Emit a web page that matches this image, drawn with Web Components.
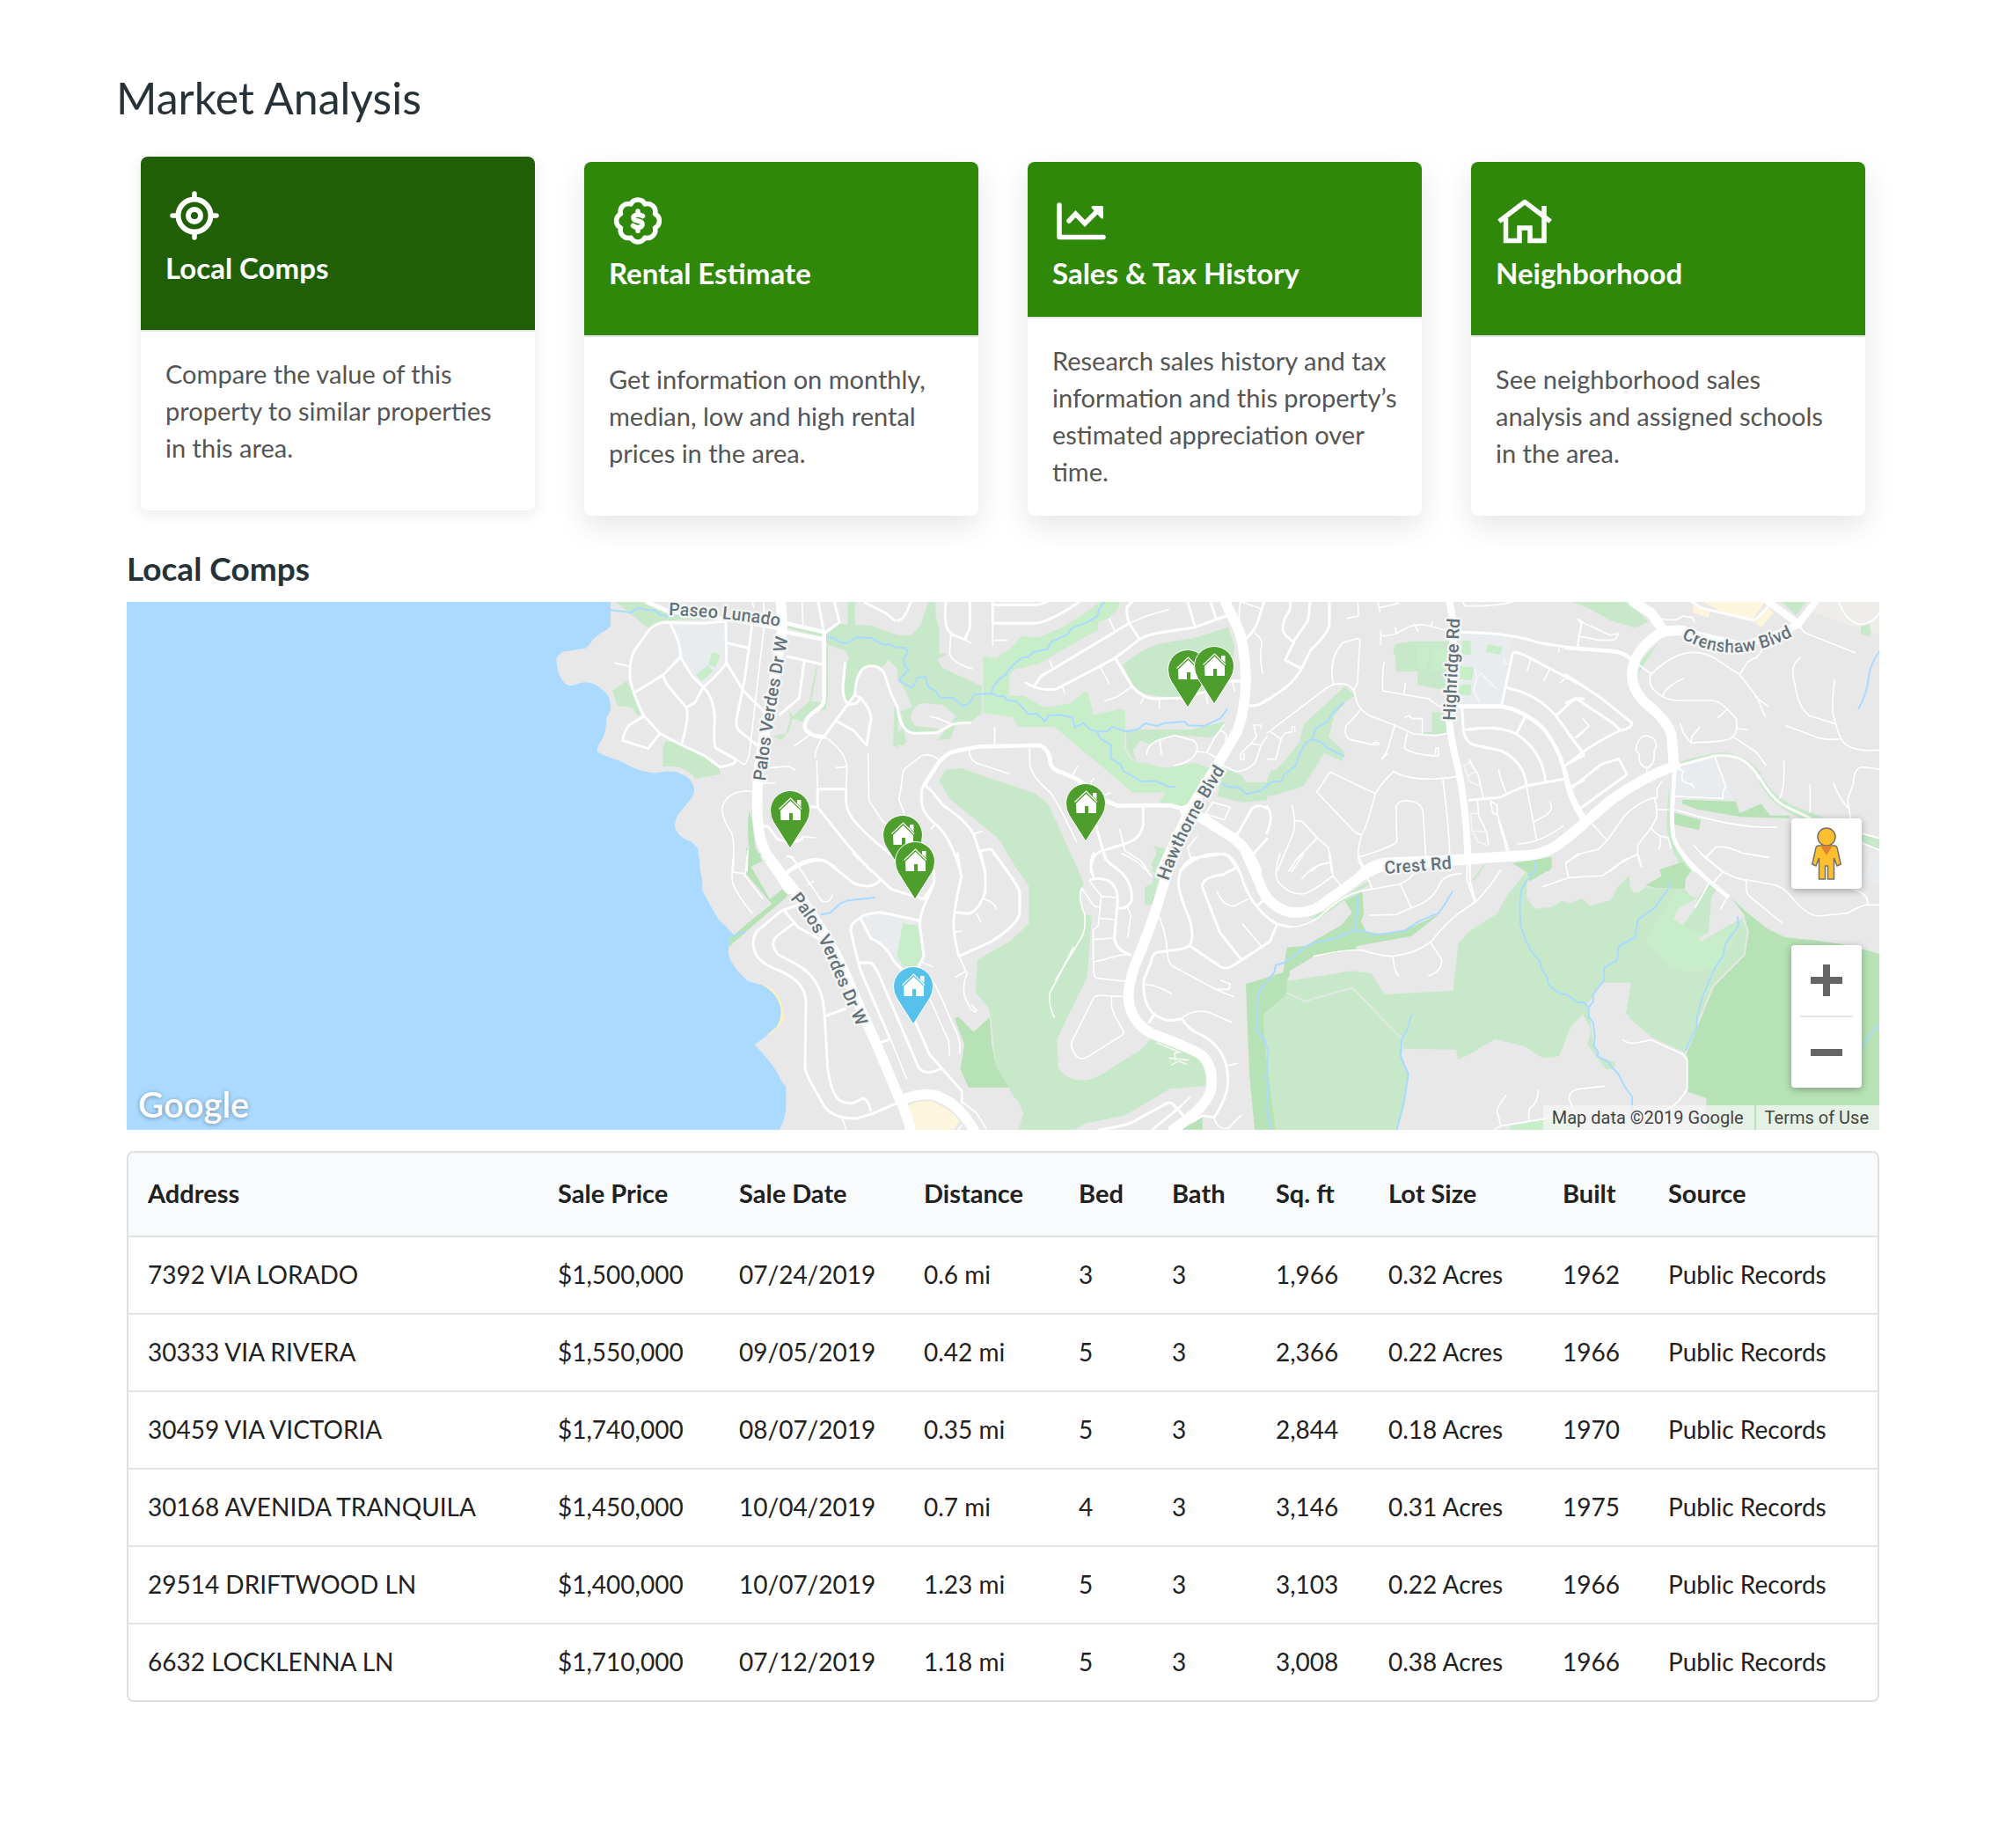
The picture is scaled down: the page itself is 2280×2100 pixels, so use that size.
<!DOCTYPE html>
<html lang="en">
<head>
<meta charset="utf-8">
<title>Market Analysis</title>
<style>
  body { margin: 0; background: #fff; font-family: Lato, "Open Sans", sans-serif; color: #212121; }
</style>
</head>
<body>
<market-analysis></market-analysis>

<script>
function define(name, html, setup) {
  customElements.define(name, class extends HTMLElement {
    constructor() {
      super();
      this.attachShadow({ mode: 'open' });
    }
    connectedCallback() {
      this.shadowRoot.innerHTML = html;
      if (setup) setup(this, this.shadowRoot);
    }
  });
}

/* ---------- card icons ---------- */
const ICONS = {
  target: `<g fill="none" stroke="#fff" stroke-width="6"><circle cx="33" cy="33" r="18.5"/><circle cx="33" cy="33" r="7"/>
    <path stroke-linecap="round" stroke-width="5.5" d="M33 8V14M33 52V58M8 33H14M52 33H58"/></g>`,
  badge: `<g fill="none" stroke="#fff" stroke-width="5.5" stroke-linejoin="round">
    <path d="M25 14 A9 9 0 0 1 41 14 A9 9 0 0 1 52.500 25 A9 9 0 0 1 52.500 41 A9 9 0 0 1 41 52 A9 9 0 0 1 25 52 A9 9 0 0 1 13.500 41 A9 9 0 0 1 13.500 25 A9 9 0 0 1 25 14Z"/>
    <path stroke-linecap="round" d="M38.500 27.500 Q35 25.500 32 26 Q27.500 27 28 30 Q28.500 32.500 33 33 Q38.500 34 38 37.500 Q37.500 40.500 33 40.500 Q30 40.500 27.500 38.500M33 22V26M33 41V44.500"/></g>`,
  chart: `<g fill="none" stroke="#fff" stroke-width="5.500" stroke-linecap="round" stroke-linejoin="round">
    <path d="M8 15V51.500H58"/><path stroke-linejoin="miter" d="M19 33L26.500 25L37 36L52 21"/>
    <path fill="#fff" stroke-width="3" d="M46 17.500H56.500V29Z"/></g>`,
  house: `<g fill="none" stroke="#fff" stroke-width="5.500" stroke-linecap="round" stroke-linejoin="round">
    <path stroke-linecap="square" d="M6 32L33 11.500L60 32"/><path stroke-linejoin="miter" stroke-linecap="butt" d="M11.500 30V55.500H27V41H39V55.500H55V16"/></g>`
};

define('analysis-card', `
<style>
  :host { display: block; }
  button { all: unset; box-sizing: border-box; cursor: pointer; display: flex; flex-direction: column; width: 100%; height: 100%;
    border-radius: 8px; overflow: hidden; background: #fff; box-shadow: 0 12px 32px rgba(38, 50, 56, .12); }
  :host([selected]) { transform: translateY(-6px); }
  :host([selected]) button { box-shadow: 0 4px 16px rgba(38, 50, 56, .1); }
  .head { flex: 1 1 auto; padding: 28px 28px 29px; background: #2f880a; color: #fff; border-bottom: 2px solid #e8e8ea; }
  :host([selected]) .head { background: #205f06; }
  svg { display: block; width: 66px; height: 66px; margin: 6px 0 5px; }
  .title { display: block; font-size: 33px; line-height: 42px; font-weight: 700; }
  .body { flex: 1 1 auto; padding: 27px 24px 29px 28px; font-size: 29px; line-height: 42px; color: #555; }
</style>
<button type="button"><span class="head"><svg viewBox="0 0 66 66" aria-hidden="true"></svg><span class="title"><slot name="title"></slot></span></span>
<span class="body"><slot></slot></span></button>`,
(host, root) => {
  root.querySelector('svg').innerHTML = ICONS[host.getAttribute('icon')];
  root.querySelector('button').setAttribute('aria-pressed', host.hasAttribute('selected'));
});

/* ---------- map pins ---------- */
define('map-pin', `
<style>
  :host { display: block; position: absolute; width: 46px; height: 67px; color: #4d9e2d; }
  :host([subject]) { color: #56c1ea; }
  svg { display: block; overflow: visible; }
</style>
<svg width="46" height="67" viewBox="0 0 46 67" role="img" aria-label="Home">
  <path fill="currentColor" stroke="#fff" stroke-width="1" d="M23 66 L4 36 Q0.500 30 0.500 23 A22.500 22.500 0 0 1 45.500 23 Q45.500 30 42 36Z"/>
  <path fill="#fff" d="M12 22.500L23.500 11.500L35 22.500V34H26V26H22V34H12.500ZM31 11H35.500V19L31 15Z"/>
  <path fill="none" stroke="currentColor" stroke-width="1.200" d="M10.500 23.500L23.500 10.800L36.500 23.500"/>
  <path fill="none" stroke="#fff" stroke-width="1.200" d="M10.500 21.500L23.500 9L36 21.500"/>
</svg>`);

/* ---------- map drawing: sheets share one scale and are placed by origin ---------- */
const SHEETS = { A: [600, 670], B: [1020, 670], C: [1440, 670], D: [1780, 670], E: [760, 970], F: [1200, 970], G: [1660, 970] };

const LAYERS = [
  ['water', {
    A: 'M-1368 42H282V122Q270 140 245 150L220 172Q210 192 195 200L120 212Q98 225 97 240Q100 280 112 300Q125 325 145 328Q165 325 180 318Q210 312 230 325Q258 340 275 365Q283 380 282 410L268 438Q267 490 250 515Q235 535 235 552Q270 572 300 578L370 612Q420 630 460 622Q500 615 520 628Q560 640 567 680Q568 700 550 720L510 770Q495 800 505 820Q520 850 555 858L580 882L588 960H-1368Z',
    E: 'M-1848 0H103Q100 40 115 90V125Q140 175 170 225Q200 250 220 275Q200 310 205 345Q215 385 270 435Q310 445 340 455Q385 480 390 530Q388 570 370 590L335 620L293 652Q350 710 372 750Q385 780 400 795V870Q395 910 378 941H-1848Z'
  }],
  ['school', {
    A: 'M490 118L675 112V240L600 325L560 300L520 230L515 185Z',
    C: 'M660 150L740 150L835 165L800 390H690L655 380Z',
    D: 'M375 610L505 570L545 670L575 718L375 705ZM1020 960L1068 880V960Z',
    E: 'M655 222L700 205L855 228V385L800 385L760 330L690 290Z',
    G: 'M1375 85L1400 0H1428V110Z'
  }],
  ['plain', { D: 'M850 42H1068V155L830 75Z' }],
  ['beach', { E: 'M318 447Q350 450 375 485Q395 520 393 570L350 615L335 618L368 590Q385 565 382 530Q375 480 318 447Z' }],
  ['shops', {
    D: 'M468 42H680L638 98L540 80ZM435 52L490 75L485 95L432 78ZM690 65L708 78L665 128L642 112Z',
    E: 'M818 860Q850 840 900 845Q960 870 993 912L970 941H840Z'
  }],
  ['green', {
    A: 'M300 42L415 135Q440 108 470 105L660 100L680 95L480 75L390 42ZM288 345L340 310L355 345L385 425L375 430L355 402L305 396ZM460 540L470 515L520 528L600 565L650 608L658 630L572 644Q540 605 490 602H460ZM885 120L1010 150L1060 115L1090 120V42H1115V120L1170 122L1260 155V270L1230 240L1208 265Q1170 250 1140 270Q1120 300 1118 350L1090 390Q1072 380 1072 350L1082 250L1095 235L1085 210L1015 185L1010 165L885 130ZM1013 190H1023V370L1015 410L990 410L940 450L900 440Q900 480 865 512L835 500L880 490L895 440L888 410L905 430L960 380L1013 385ZM1250 400H1262V540L1245 530ZM982 260L988 262L967 380H960Z',
    B: 'M0 155H48L80 120L105 42H130V85L142 130V218L172 220L135 238L155 268L290 330V420L250 450H205L180 508L135 514L165 478L60 490L25 470L10 415L50 400L30 350L5 310L0 300ZM0 490L20 470L30 520L20 532L0 530ZM780 477H1000L1115 450V470L1070 505L940 495L860 528L830 515L803 545L815 583L800 580L778 545ZM768 255Q830 205 890 185L1010 165L1128 128L1150 190L1140 300L1045 350L965 370Q900 365 850 358Q810 345 790 300ZM142 650L165 615L215 608L470 695L515 732L618 960H412L345 850L300 812L180 715ZM1115 610L1170 630L1190 657H1260V718L1180 726L1090 705ZM875 872L915 885L895 960H865L890 930Z',
    C: 'M265 330L300 360L265 385L230 430L210 500L265 555L258 585L195 558L125 670L35 698L0 705V650L15 615H30L60 585L110 520L125 460ZM430 210L437 185L500 176H630V340L590 340L512 325L515 280H440L438 228ZM562 416L612 420V492H535V486H562ZM1045 42H1080V55Z',
    D: 'M20 42H205L245 75L280 108L238 130L150 105L80 65ZM315 180L262 262L245 290L255 240ZM735 42H818L785 88ZM1005 125L1035 118L1040 150L1030 160L1005 150ZM380 590Q470 560 540 555Q620 565 668 632L650 630Q600 570 530 565Q470 570 380 600ZM655 650L670 640Q705 705 770 735L880 778H800Q700 740 655 650ZM350 670L355 800Q365 880 425 960L385 930Q345 860 343 800ZM1005 835L1068 850V888L1005 862Z',
    E: 'M1155 0H1322V941H1193L1210 885L1190 840L1180 835L1115 718L1098 555L1090 525L1047 475L1053 362L1165 298L1228 238V112Z',
    F: 'M0 0H50L95 100L80 145L98 205L123 213L107 420L5 630L8 730Q40 775 95 773Q130 770 160 750L290 668Q310 650 325 628L480 690Q515 730 512 792L390 802L238 892L100 920L65 941H0ZM303 115L330 100L335 60L325 35L345 0H375L330 175H303ZM788 435L1010 400L1075 407L1120 480L1355 467L1373 305L1410 265L1440 248V668L1372 702L1365 668L1185 665V635L1180 690L1202 750L1190 860L1165 941H750L735 830L712 640L708 548L788 480ZM860 220L930 190L1030 115L1065 95L1070 105L1020 135L900 220Z',
    G: 'M0 300L35 262L125 205L160 140L225 62L228 90L225 150L253 188L310 182L345 162L377 170L413 152L440 177L512 160L535 115L575 75L580 120Q590 140 610 130L632 115L765 122L790 150H808L850 100L880 110L855 150L848 265L820 298L970 215L983 265L970 345L860 450L810 575L770 680L655 628L575 560L575 548L563 550L582 440H485L430 515L445 580L452 640L470 690L530 715L520 735L495 735L433 650L445 600L417 548L377 588L338 688Q310 700 275 693L218 657L120 633L0 697ZM40 90L78 38L82 42L48 92Z'
  }],
  ['lawn', {
    A: 'M572 290L615 258L632 280L592 312ZM628 214L656 222L640 265L616 255Z',
    B: 'M292 225L335 235L380 205L425 160L480 163L560 130L640 80L690 42H757L752 65L720 98L685 110V140L650 155L600 185L545 215L490 250L400 272L381 290V362H430L500 402L590 388L640 347L650 350L668 427L760 407L776 412L778 490L775 545L800 580L885 602L915 608L1010 590L1070 610L1110 610L1040 700L970 740L895 725L912 692H803L535 468H410L395 435L292 420Z',
    C: 'M512 195L555 200L545 270L508 265ZM567 202H610V280L560 275ZM665 175L695 174V222L665 220ZM752 186L802 196L797 222L747 213ZM660 262L705 265L700 310L658 305ZM652 345Q655 320 680 322L697 325L694 362L655 358Z',
    E: 'M798 238L850 245L866 350L845 385L800 385L778 348Z',
    G: 'M740 125L800 150L755 180L725 225L762 242Q800 275 845 272L815 298L950 240L880 390L775 403L705 378L632 290ZM165 941L175 925L280 908L400 890V941Z'
  }],
  ['wood', {
    A: 'M755 750L765 790L775 880L800 925L760 945L765 960H745V880L755 885Q745 810 755 750Z',
    C: 'M840 932L910 922L970 912V950L960 960H880Z',
    D: 'M398 716L578 722L592 762L665 730L695 770H762V780L595 775L450 750L396 730ZM368 760L460 785L453 820L368 800ZM320 955L390 930L430 960H320Z',
    E: 'M275 0H315L310 20L278 40L345 155L390 120L408 135L400 150L300 235L205 318L208 285L225 275L290 220L352 172L300 110L262 65L270 40ZM975 563L988 556L1040 608L1095 558L1100 640L1115 720L1160 797H1022L995 735L1008 650Z',
    F: 'M985 160L1045 130L1050 210L1040 230L1058 265L1110 275L1190 262L1310 205L1212 282L1025 315V328L880 350L798 400V415L788 435V480L708 548L712 640L735 830L750 941H678L660 750L648 445L775 405L788 320L850 315L975 243L1010 200ZM430 941L500 897V941Z',
    G: 'M180 35L310 12V50L235 95L225 62ZM630 108L685 78L680 55L760 30L785 62L768 85L765 122L660 116ZM915 145Q940 165 970 195L1045 255L1105 285L1200 295L1300 308L1380 328L1428 342V941H838V833L775 812V700L770 685L810 585L862 455L970 345L983 265L970 215Z'
  }],
  ['land', {
    B: 'M45 440Q50 395 85 387L155 392L200 432L180 460L150 475L60 465Z',
    G: 'M808 150L765 175L745 185L725 225L760 242L800 185ZM857 150L915 140L970 212L820 300L812 288L845 270Z'
  }],
  ['trail', { B: 'M290 330V420M778 490V545L800 580L830 590', F: 'M788 475L848 503L1012 458L1180 632', G: 'M965 225L980 265L968 345L862 452L765 685' }],
  ['fence', { G: 'M630 116L765 122M740 125L632 290L705 378L775 403L880 390L965 220' }],
  ['stream', {
    A: 'M282 70L330 75L350 80L375 62L400 68L430 70L450 85L480 92L510 85M1015 162L1045 165L1060 178L1085 183L1120 163L1170 165L1210 187H1235L1260 198',
    B: 'M0 197L28 198L35 215L22 235L25 258L38 272L5 310L50 335L70 300L95 298L105 332L130 345L148 370L190 368L222 397L245 388L262 358L320 354Q330 310 370 290Q380 265 425 232L445 230L465 212L512 203L525 178L580 152L595 130L640 115L680 92L690 62L705 42M320 354L345 365L360 362L375 378L405 380L447 425L475 422L503 450L515 430L550 427L595 435L605 470L635 455L655 475L680 484L715 484L732 467L782 485L822 475L845 456L885 465L910 455L980 450L990 463L1045 465L1100 440L1123 410M680 484L692 508L728 530V575L762 598L770 618L835 655L880 652L925 672H947M1110 662L1125 672L1165 675L1190 697L1240 685L1260 668',
    C: 'M0 665L20 655H48L58 632L98 600L118 545L135 520L155 510L165 475L205 450L225 420L262 386M155 510L185 520L205 540L262 567',
    D: 'M1068 212Q1040 250 1033 290Q1028 350 998 406',
    E: 'M520 208L550 202L585 170L610 160L702 150M205 280L225 280L240 270L258 270',
    F: 'M1352 130L1325 175L1305 203L1240 230L1190 262L1130 272L1085 277L1050 265L1015 262L945 292L885 302L845 322L810 350L785 370L750 380L745 405L720 435L692 475L685 520V605L710 632L725 675L718 765L724 800L718 870L735 941M1027 145L1028 190L1018 262M1212 552L1198 600L1180 632L1175 690L1202 750L1190 830L1175 890L1163 941',
    G: 'M253 28V60L225 92L207 125L202 180L205 245L220 290L245 340L270 365L275 390L297 425V440L315 462L345 480H362L400 508H420L437 525M710 98L708 120L662 185L605 225L595 285L540 315L533 365L490 388L488 435L452 480V505L437 525V555L452 575L458 625L455 655L470 678L465 690L500 708L540 755L560 795L585 828V880L600 941M945 215L948 245L905 305L895 350L870 385L845 440L825 490L808 550L805 590L768 670M1368 655L1428 582'
  }],
  ['lane', {
    A: 'M297 250L348 262M805 130L755 560Q745 600 735 595L712 580M1160 560L1163 720L1210 790L1260 830M985 583L988 680M1000 510L980 555V572M1010 500Q1085 550 1088 610L1085 680M1050 607L1085 604M820 608L890 602L910 615M800 660H842M765 688Q680 680 662 745Q665 790 695 830Q705 860 700 960M935 42L938 120M910 532L955 500M750 888L747 960M885 908L900 915L920 940M935 842L980 846M805 42V110M765 42L770 60',
    B: 'M325 115V190M325 172L373 173M182 155L178 220Q190 250 255 270M230 172L248 181M115 433Q150 440 185 460M332 470V530M245 545Q245 585 280 595L380 628M450 535L452 600Q460 640 520 690Q545 720 610 858M142 580Q110 555 80 568L25 610Q15 625 15 660L5 715L30 780M520 243L527 262M562 330L570 352M692 265L722 320M707 380L750 365L800 330M830 388L838 370M893 375V405M722 100L740 138M790 115L850 90L925 68M615 602L598 630M670 643L655 665M725 692L710 700M128 800L115 815M262 832L288 824M850 563Q850 530 890 513L945 497L1010 515Q1030 535 1018 555Q1010 585 945 600M895 513L900 562M1020 552L1055 555L1100 580M1055 555L1085 500L1115 460M1100 480Q1130 490 1118 510M1075 725L1135 742L1115 785L1050 765ZM1140 310L1150 345M1050 350L1058 388M1170 42Q1160 90 1170 115M1175 42L1240 65M1220 150Q1250 170 1240 200Q1235 240 1245 285M758 818L770 870L775 890L830 925L855 960M1020 842L990 880L1000 915M1215 465L1225 500L1205 525L1170 560V580H1182V560M1215 462H1240V472M1205 525L1240 530L1260 500M1240 530L1220 590Q1190 620 1155 620L1110 600',
    C: 'M0 490L190 345Q230 310 275 325Q300 335 305 380Q315 410 350 430L435 462L500 492L575 498L615 490M225 320Q210 230 260 180L310 167Q318 168 317 185L308 320L298 340M318 412L270 465Q260 500 285 512L365 530L382 528Q380 518 365 522L358 530M435 465L410 550L392 577L410 560M478 490L468 540Q500 565 585 567V540H575V560M400 250Q392 280 395 345L550 372L585 397H620M472 320L468 352M388 142V188M388 158Q430 158 450 145Q490 118 530 120Q570 125 615 142M437 130L442 148M502 118L515 140M565 110L558 125M378 42L385 75M385 62L450 46M310 42L312 90L273 98M470 435L485 430L495 440H530V490M170 690L215 622L370 695M170 690L298 825L322 838M432 620Q390 660 370 695Q340 810 322 838Q305 900 315 930L335 960M432 620Q500 660 645 638M440 740Q450 715 480 720Q530 725 532 760L542 910M440 740L443 860Q420 880 315 912M600 650Q620 800 623 900M85 735Q100 790 90 830L35 960M95 787L120 790L170 845L210 880L220 960M170 848L100 920L75 960M215 932L180 938L150 960M12 485L48 510L60 490L85 485V468H95V485M48 510L30 578L0 578M668 42L675 55Q760 60 840 42M690 580L720 630L738 710M718 720L722 770L750 830L755 870M790 615Q800 660 815 690M885 670L920 855M965 725Q980 750 950 770L910 792M1010 805Q930 865 855 867M888 275L900 238M945 310L965 270M1000 318L1022 298M1060 100L1072 115L1060 195M995 200V212M690 940V960M1055 505L1080 485M762 720L785 735V768L770 760Z M785 765L825 890M790 790L818 890',
    D: 'M40 100L55 110L42 165L38 195M42 158L110 172H165L180 150L150 155L55 112M310 92Q330 105 370 103Q390 98 400 90L430 95L438 110M250 258L290 288Q400 180 500 230L590 288L650 365L678 432M645 365L688 398M592 290L620 245L650 230L670 205M290 288Q270 330 330 365Q360 380 400 378H500Q530 380 580 440Q590 490 560 508Q540 520 425 522L400 490L390 458M425 522L430 500L455 470M330 362Q340 330 400 303M548 410L518 437M585 474L618 477M570 502L650 555L680 598M798 232Q760 260 780 320Q790 400 830 430L920 458M915 310Q905 400 910 425Q930 500 945 520Q980 555 1068 547M750 464L860 505Q900 515 938 508M800 130L815 148L985 215M930 42Q960 120 1010 118Q1050 110 1068 80M275 608V630M275 608Q245 600 250 560Q225 545 255 505Q275 490 300 510Q315 530 300 550Q305 600 275 608M58 440L78 465L30 505M325 655L310 680V710L290 712Q240 730 200 770L140 855M300 708Q312 740 308 780L290 812L245 870Q240 910 257 945M310 750H350M290 812Q310 845 348 845L358 882M320 845L322 870L316 885M0 930L50 900L110 885L140 855L90 800M240 905L200 920L150 960M370 750L440 770Q600 815 720 810M437 873L475 915L530 958M475 915L510 878Q540 870 600 898L690 913M743 585Q745 690 728 710M832 665V758M1068 612L1010 605Q980 610 980 660L960 715L970 780M912 660Q930 710 960 742M372 705L535 712V690L545 670L508 572M1005 830L1068 848M1005 862L1068 888M385 610L400 620Q390 640 400 655L430 665L435 675',
    E: 'M222 0Q210 90 222 110Q240 150 285 203M218 63L255 68L320 152M268 0L262 68M403 8L420 10L520 160Q545 175 558 143M475 105L493 95M1075 155Q1110 165 1118 188M1050 205L1065 232M975 268L1000 264M990 350L1018 410Q1000 450 1010 490L1030 530L1045 540L1050 535L1035 518M980 420L1010 402M862 370L898 385M905 440Q940 510 970 585Q1000 640 992 680M890 495L955 640L958 690M755 630L812 768M1000 845L1050 885L1083 938M593 905L605 941M1380 320L1300 475Q1295 520 1315 558M1380 630Q1365 650 1380 675M987 941L1000 925',
    F: 'M550 130Q570 180 610 178L655 155M637 240L700 315M88 118Q75 150 98 205Q105 260 85 290L0 430M115 92L155 145L210 150M90 120L130 178L150 183M155 145L145 245L128 260V370L225 345H255M148 220L200 225M128 293L195 288M130 370Q125 420 140 425L235 435M245 185L256 210L245 285M345 200Q375 260 380 330Q380 370 400 385L550 465L607 488M545 463H590L595 445L562 432M305 445Q350 450 395 478M235 488L145 483L130 490L55 640Q50 670 75 695Q90 705 110 692L225 620Q235 610 228 600L200 550L190 520V488M430 560Q470 530 520 540L600 575M587 722L620 715M632 892L590 935Q550 945 540 900M765 0Q740 70 760 100Q800 140 840 138Q870 135 945 75L935 0M840 85Q880 35 935 30M805 60L845 0M945 75L970 105M1030 0L1078 118M800 248Q840 255 900 215Q980 140 1040 128L1170 105Q1200 95 1220 70M1175 105L1212 185M1068 210L1160 208L1212 185Q1290 160 1310 100Q1330 70 1382 68M880 350Q960 330 1040 328Q1110 350 1150 350Q1230 340 1280 300Q1350 210 1432 165L1412 120V40M1150 350Q1150 390 1168 416M1278 303L1315 360Q1320 400 1272 416M455 0L462 15M225 0Q280 20 325 75M458 830L425 862',
    G: 'M22 38V90L48 165M32 38V90L52 165L0 200M280 113L370 82L485 75L540 35L605 0L617 45M368 82L358 35L400 0M820 0L900 65Q950 90 980 90L1060 105Q1100 110 1130 150Q1180 210 1220 213L1320 203Q1350 185 1380 175H1428M835 15L850 0M892 65L862 100M975 92Q970 130 985 145L1095 235M1330 120Q1390 130 1390 175M910 145L888 187M850 95L820 150L800 183M970 0L1050 13M138 55Q100 115 52 165M555 635Q570 650 600 645L650 635L760 685L773 705V800Q750 850 700 875M155 825Q120 870 125 880L138 928L115 941M138 928L285 905L420 885M265 808Q265 850 235 870Q230 890 235 908M490 793L400 803Q370 810 370 835L390 885'
  }],
  ['path', {
    C: 'M672 600L690 590L710 620L685 635ZM685 635L690 655L725 668M720 762L695 765L700 822L745 825M700 822L720 860L755 872M710 270L715 300L730 285L780 335M715 300L705 345L725 385M810 235V250L822 255',
    F: 'M345 645L425 678L405 680L408 705M388 697L452 704M395 720L420 708L445 718'
  }],
  ['street', {
    A: 'M415 135Q440 112 470 112L600 115L675 108M415 135L365 205Q345 240 348 300Q355 350 395 430L450 490L520 528L600 565L655 605L700 595L712 580L640 540Q632 525 637 440Q635 370 598 332L560 295L520 230Q522 180 488 122M362 352L460 292L518 232M460 292L475 325L540 402Q552 430 525 525M540 402L570 385L598 332Q640 300 677 250L675 112M677 250L735 345L805 415M765 115L740 300L712 440Q708 470 720 480L780 530M680 182L748 198M395 432L345 462Q320 500 325 515L410 542L450 490M885 228L1005 255M942 245L925 370L860 425M1055 450L1110 480L1155 530L1170 440Q1170 410 1135 370L1115 360M1010 500L1115 358Q1120 260 1170 260Q1210 260 1220 300L1240 360L1260 400M1082 250L1074 330Q1074 380 1095 392L1120 388L1135 370M990 42L1010 150L1062 112L1045 42M1150 45L1220 80L1250 105M1085 680Q1080 740 1100 770Q1130 820 1260 920M988 680H1085M988 682V742L965 740M988 742L1090 870L1170 960M885 960Q990 880 1060 960M800 805L820 808L850 850Q900 870 935 850',
    B: 'M165 42Q155 140 190 155L230 170L247 130V42M325 42V115M325 52H480L510 42M325 115H470Q520 110 620 42M438 318L465 332Q500 345 540 340L740 235L825 170Q850 155 890 148L1015 128L1120 90M465 330L490 295L790 115Q780 90 783 60L800 42M790 115L825 168M990 42L1015 128M1068 42L1085 95M742 232L800 330Q830 365 870 372L965 370L1045 350L1130 312H1170M45 42Q25 105 0 105M0 400Q10 490 60 490L135 488L185 460L210 455L248 454M92 665Q75 690 85 740Q95 770 130 800Q180 840 215 960M92 665L120 690L155 735Q240 790 262 840L300 960M285 890L320 885L375 960M838 735V800Q830 850 780 865L700 890Q660 900 660 960M675 800L710 920L745 950M965 960Q1000 920 1050 905Q1110 895 1130 910L1165 960M1150 850L1210 745Q1230 730 1260 745M1210 905L1260 850M1185 170Q1210 150 1225 120L1250 42M1200 395Q1230 400 1260 375',
    C: 'M80 42L78 70Q50 110 55 140Q60 160 92 178L62 240L118 270M92 175L140 105L147 42M213 42V115Q210 150 150 205L118 270Q90 320 40 350L0 378M655 145L740 148Q850 155 930 182L1080 205M800 395L838 215Q860 210 900 235L1080 330M820 335Q920 355 985 430L1080 560M850 492L880 435M985 430L1050 372H1080M665 398L670 485Q680 525 710 530L800 550Q880 590 885 670M680 478Q790 460 850 492Q940 550 950 655M690 718L795 708Q830 690 880 670L1018 645M1015 600L1080 565M1030 675L1080 650M0 740Q25 770 0 830',
    D: 'M660 642Q700 710 740 735L830 778M385 600L500 568Q560 560 600 580Q640 605 660 645M0 290L120 370L225 455Q225 470 190 480M0 385L35 372L160 455L185 480Q100 520 50 560L0 598M0 480L55 555M15 680L120 595L180 577L208 630L50 745M0 620Q20 720 72 785M430 42L460 62L640 105Q650 100 690 58',
    E: 'M385 195L300 265Q275 310 305 355Q325 380 380 400Q470 440 468 510L465 730Q470 755 490 790L530 860Q560 905 640 903L700 885L780 850M430 235L370 280Q340 310 375 345L440 380Q530 430 532 560L542 730Q550 800 575 835Q600 855 630 850L660 835Q680 835 688 875M385 195L440 175M395 195L440 250L520 295M540 552L600 530M400 70Q460 25 515 22Q545 25 560 45L630 100Q690 125 720 92M630 0L760 122L870 155L905 100V60M905 100L870 180Q850 230 860 270L870 350L850 390M855 228L720 200Q660 205 650 222Q610 240 625 280Q640 350 655 400L755 632L720 645M655 372H690Q705 385 720 420L850 725Q870 760 925 735M655 222L690 290Q740 310 770 370L800 400M835 560L890 685L1000 810V850M985 0L998 80Q970 200 972 250Q975 300 990 350L1100 300Q1195 240 1197 200V130Q1180 90 1110 0M1065 0L1080 70V130Q1055 200 1020 205L975 200',
    F: 'M165 0Q170 30 200 45Q265 90 258 160Q245 190 215 185M120 88Q165 80 190 100Q215 125 210 170L200 290Q205 330 255 345M130 85Q110 30 130 0M470 15Q420 40 418 100Q420 140 455 220Q475 290 455 315L430 325L345 337Q330 340 325 370L300 430Q295 520 340 550Q380 580 430 562Q450 600 500 620Q590 670 587 780Q585 830 540 900L500 893L465 915M470 15L575 0Q620 20 640 100Q680 200 755 240L797 250M755 240L730 300L600 385Q580 395 560 385L455 313M612 50L570 72Q495 80 500 115L560 270L600 320L630 358M685 180L708 160M318 575L335 550M150 941Q260 925 280 905L385 848Q400 850 410 865L440 900M330 941L425 862'
  }],
  ['road', {
    A: 'M405 42L480 75L680 100L850 130M880 115L1010 145M880 145L1010 170M1010 145V370Q1010 395 985 410Q940 440 945 470Q955 500 1010 502',
    B: 'M92 665L140 590Q170 555 200 550L280 535L480 531Q510 535 520 575Q520 605 540 615L600 640L640 665M710 720L750 737L930 735L980 750',
    C: 'M645 398H800Q870 410 940 470Q1010 560 1020 650Q1030 710 1075 785',
    D: 'M0 198L160 210Q200 215 225 240M370 610L362 750Q360 800 365 840Q380 890 440 955',
    G: 'M745 -15Q800 60 910 145'
  }],
  ['avenue', {
    C: 'M622 42Q640 120 635 170L620 430Q625 510 650 600Q680 740 685 910',
    D: 'M385 140L600 190L700 160L790 120L850 42M690 42L790 115'
  }],
  ['highway', {
    A: 'M862 42L868 120Q860 200 830 360L795 560Q780 650 782 750Q785 830 800 870Q820 920 852 960L890 1020',
    B: 'M1118 42L1165 140Q1185 200 1188 300Q1188 400 1160 480L1090 600L1000 745L900 960M980 752L1040 780L1150 850Q1200 890 1225 960',
    C: 'M320 975Q350 940 400 932L620 922L900 905Q970 895 1010 855L1080 800',
    D: 'M230 42L290 80L325 130M400 140Q340 135 310 155Q220 220 225 300Q230 350 275 390Q350 450 360 500L368 600M372 600Q260 640 150 720L0 850',
    E: 'M332 0L400 90Q480 180 580 360Q640 500 700 630L785 830Q810 880 825 941M790 842Q850 815 900 822Q980 840 1040 941',
    F: 'M400 0L345 180Q320 260 270 380Q245 450 248 500Q260 580 330 615Q480 670 500 690Q540 730 530 800Q520 860 400 941M650 0L695 100Q720 180 800 200Q860 205 900 180L1010 100Q1060 60 1110 45Q1250 30 1440 18'
  }]
];

const LABELS = [
  ['Paseo Lunado', 'M760 699Q825 701 900 714'],
  ['Palos Verdes Dr W', 'M870 888Q877 830 884 790L899 705'],
  ['Palos Verdes Dr W', 'M898 1021Q930 1060 945 1100L982 1186'],
  ['Hawthorne Blvd', 'M1328 1001Q1344 950 1402 860'],
  ['Highridge Rd', 'M1654 819L1660 685'],
  ['Crest Rd', 'M1574 993L1665 986'],
  ['Crenshaw Blvd', 'M1911 725C1950 747 1995 751 2058 711']
];

define('street-map', `
<style>
  :host { display: block; position: relative; height: 600px; overflow: hidden; background: #e8e8e8; font-family: Roboto, sans-serif; }
  .canvas { display: block; width: 100%; height: 100%; }
  .water { fill: #aadaff; } .school { fill: #e8ecef; } .plain { fill: #eeede9; } .beach { fill: #faf0c4; } .shops { fill: #fdf5dc; }
  .green { fill: #c8e9c9; } .lawn { fill: #c8edc9; } .wood { fill: #b6e2b6; } .land { fill: #e8e8e8; }
  .trail, .fence, .stream, .lane, .path, .street, .road, .avenue, .highway { fill: none; stroke: #fff; stroke-linecap: round; stroke-linejoin: round; }
  .trail { stroke: #e4e8e4; stroke-width: 6; } .fence { stroke: #d6e8d6; stroke-width: 2; } .stream { stroke: #aadaff; stroke-width: 6; }
  .lane { stroke-width: 5; } .path { stroke: #f6f6f6; stroke-width: 5; } .street { stroke-width: 9; } .road { stroke-width: 14; }
  .avenue { stroke-width: 24; } .highway { stroke-width: 35; }
  text { font: 500 20px Roboto, sans-serif; fill: #637278; stroke: #f3f4f4; stroke-width: 5px; stroke-linejoin: round; paint-order: stroke; }
  .controls { position: absolute; right: 20px; bottom: 48px; width: 80px; display: flex; flex-direction: column; gap: 64px; }
  .panel { border-radius: 4px; background: #fff; box-shadow: 0 2px 8px rgba(0, 0, 0, .3); }
  .panel button { all: unset; display: flex; align-items: center; justify-content: center; width: 80px; height: 80px; cursor: pointer; }
  .panel hr { margin: 0 10px; border: 0; height: 2px; background: #e6e6e6; }
  .logo { position: absolute; left: 13px; bottom: 4px; font: 600 40px/50px Lato, sans-serif; color: #fff; text-decoration: none; text-shadow: 0 1px 5px rgba(0, 0, 0, .35); }
  .legal { position: absolute; right: 0; bottom: 0; display: flex; font-size: 20px; line-height: 28px; color: #444; }
  .legal > * { padding: 0 12px 0 10px; background: rgba(245, 245, 245, .75); color: inherit; text-decoration: none; }
  .legal > * + * { margin-left: 2px; }
</style>
<svg class="canvas" viewBox="144 684 1992 600" preserveAspectRatio="xMidYMid slice" role="img" aria-label="Map of local comps"></svg>
<slot></slot>
<a class="logo" href="#">Google</a>
<div class="controls">
  <div class="panel"><button type="button" aria-label="Street view"><svg width="34" height="60" viewBox="0 0 34 60">
    <path fill="#fdbf2d" stroke="#73706a" stroke-width="1.500" d="M8 21H26Q28 21 29 23L33.200 42L29 44L25.500 35V59H18.500V44H15.500V59H8.500V35L5 44L0.800 42L5 23Q6 21 8 21Z"/>
    <circle cx="17" cy="11" r="10" fill="#fdbf2d" stroke="#73706a" stroke-width="1.500"/><path fill="#e2812f" d="M10 21H24L17 32Z"/></svg></button></div>
  <div class="panel"><button type="button" aria-label="Zoom in"><svg width="36" height="36"><path fill="#666" d="M14 0h8v14h14v8H22v14h-8V22H0v-8h14z"/></svg></button><hr>
  <button type="button" aria-label="Zoom out"><svg width="36" height="8"><path fill="#666" d="M0 0h36v8H0z"/></svg></button></div>
</div>
<div class="legal"><span>Map data ©2019 Google</span><a href="#">Terms of Use</a></div>`,
(host, root) => {
  const shapes = LAYERS.map(([kind, parts]) => Object.entries(parts).map(([sheet, d]) =>
    `<path class="${kind}" transform="translate(${SHEETS[sheet].join(' ')}) scale(.33333)" d="${d}"/>`).join('')).join('');
  const labels = LABELS.map(([name, d], i) =>
    `<path id="way${i}" fill="none" d="${d}"/><text><textPath href="#way${i}">${name}</textPath></text>`).join('');
  root.querySelector('.canvas').innerHTML = shapes + labels;
});

/* ---------- comps table ---------- */
const COLUMNS = [['Address', 466], ['Sale Price', 206], ['Sale Date', 210], ['Distance', 176], ['Bed', 106], ['Bath', 118], ['Sq. ft', 128], ['Lot Size', 198], ['Built', 120], ['Source', 260]];
const ROWS = [
  ['7392 VIA LORADO', '$1,500,000', '07/24/2019', '0.6 mi', '3', '3', '1,966', '0.32 Acres', '1962', 'Public Records'],
  ['30333 VIA RIVERA', '$1,550,000', '09/05/2019', '0.42 mi', '5', '3', '2,366', '0.22 Acres', '1966', 'Public Records'],
  ['30459 VIA VICTORIA', '$1,740,000', '08/07/2019', '0.35 mi', '5', '3', '2,844', '0.18 Acres', '1970', 'Public Records'],
  ['30168 AVENIDA TRANQUILA', '$1,450,000', '10/04/2019', '0.7 mi', '4', '3', '3,146', '0.31 Acres', '1975', 'Public Records'],
  ['29514 DRIFTWOOD LN', '$1,400,000', '10/07/2019', '1.23 mi', '5', '3', '3,103', '0.22 Acres', '1966', 'Public Records'],
  ['6632 LOCKLENNA LN', '$1,710,000', '07/12/2019', '1.18 mi', '5', '3', '3,008', '0.38 Acres', '1966', 'Public Records']
];

define('comps-table', `
<style>
  :host { display: block; border: 2px solid #dedfe0; border-radius: 8px; overflow: hidden; }
  table { width: 100%; table-layout: fixed; border-collapse: separate; border-spacing: 0; font-size: 28px; line-height: 42px; color: #212121; }
  th, td { padding: 21px 0 23px 22px; text-align: left; white-space: nowrap; border-bottom: 2px solid #e4e5e6; font-weight: 400; }
  th { padding: 25px 0 27px 22px; font-size: 29px; font-weight: 700; background: #f9fafc; border-color: #dfe2e3; }
  tbody tr:last-child td { border-bottom: 0; }
</style>
<table><colgroup></colgroup><thead><tr></tr></thead><tbody></tbody></table>`,
(host, root) => {
  root.querySelector('colgroup').innerHTML = COLUMNS.map(c => `<col style="width:${c[1]}px">`).join('');
  root.querySelector('thead tr').innerHTML = COLUMNS.map(c => `<th scope="col">${c[0]}</th>`).join('');
  root.querySelector('tbody').innerHTML = ROWS.map(r => `<tr>${r.map(v => `<td>${v}</td>`).join('')}</tr>`).join('');
});

/* ---------- page ---------- */
define('market-analysis', `
<style>
  :host { display: block; padding: 75px 132px 160px; }
  h1, h2 { margin: 0; color: #263238; }
  h1 { font-size: 50px; line-height: 72px; font-weight: 400; }
  h2 { font-size: 37px; line-height: 56px; font-weight: 700; }
  .cards { display: grid; grid-template-columns: repeat(4, 1fr); gap: 56px; margin: 37px 28px 32px; }
  section { padding: 0 12px; }
  street-map { margin: 10px 0 24px; }
</style>
<h1>Market Analysis</h1>
<div class="cards">
  <analysis-card icon="target" selected><span slot="title">Local Comps</span>Compare the value of this property to similar properties in this area.</analysis-card>
  <analysis-card icon="badge"><span slot="title">Rental Estimate</span>Get information on monthly, median, low and high rental prices in the area.</analysis-card>
  <analysis-card icon="chart"><span slot="title">Sales &amp; Tax History</span>Research sales history and tax information and this property’s estimated appreciation over time.</analysis-card>
  <analysis-card icon="house"><span slot="title">Neighborhood</span>See neighborhood sales analysis and assigned schools in the area.</analysis-card>
</div>
<section>
  <h2>Local Comps</h2>
  <street-map>
    <map-pin style="left:731px;top:214px"></map-pin>
    <map-pin style="left:859px;top:242px"></map-pin>
    <map-pin style="left:873px;top:272px"></map-pin>
    <map-pin style="left:1067px;top:206px"></map-pin>
    <map-pin style="left:1183px;top:54px"></map-pin>
    <map-pin style="left:1213px;top:50px"></map-pin>
    <map-pin subject style="left:871px;top:414px"></map-pin>
  </street-map>
  <comps-table></comps-table>
</section>`);
</script>
</body>
</html>
